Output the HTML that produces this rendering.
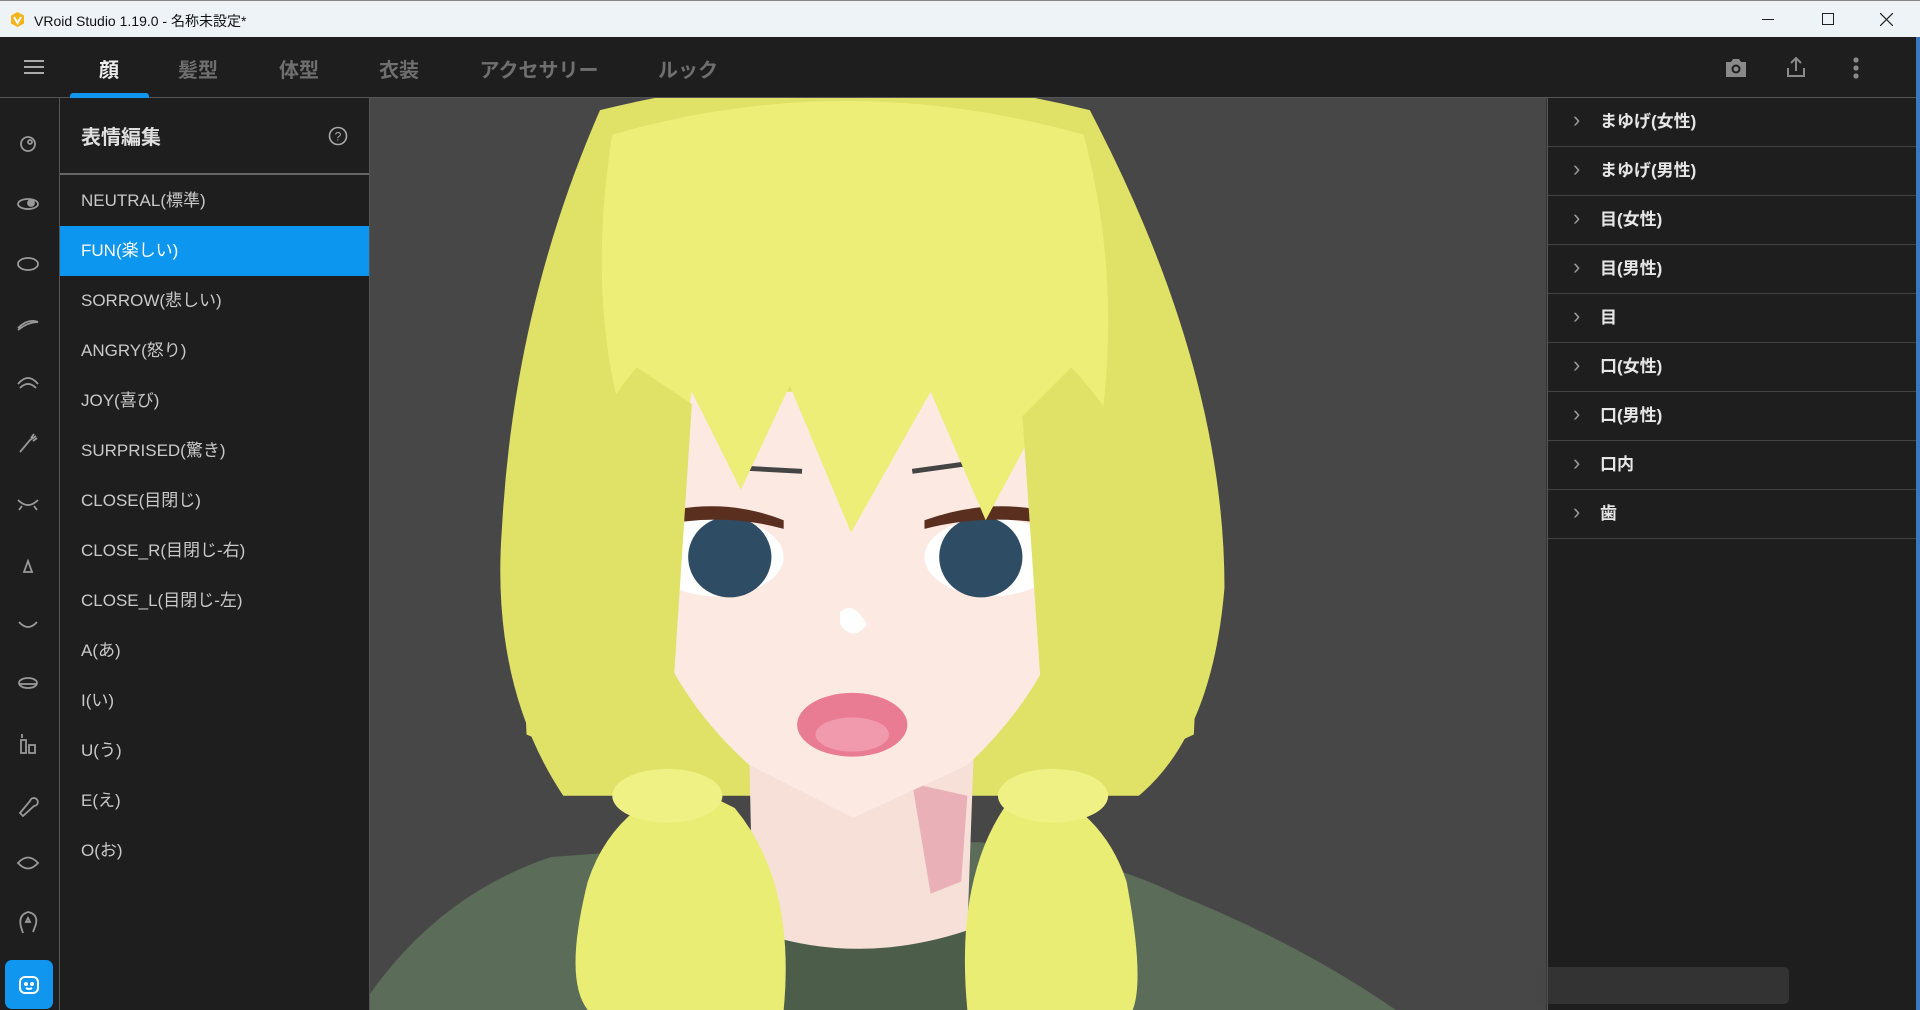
<!DOCTYPE html>
<html><head><meta charset="utf-8">
<style>
*{margin:0;padding:0;box-sizing:border-box}
body{width:1920px;height:1010px;overflow:hidden;background:#1d1d1d;font-family:"Liberation Sans","Noto Sans CJK JP",sans-serif;position:relative}
.abs{position:absolute}
#title{left:0;top:0;width:1920px;height:37px;background:#eef3f8;border-top:1px solid #888;color:#111;font-size:14px}
#title .t{left:34px;top:10px}
#tool{left:0;top:37px;width:1916px;height:61px;background:#1e1e1e;border-bottom:1px solid #555}
.tab{top:17px;font-size:20px;font-weight:bold;color:#6f6f6f;transform:translateX(-50%)}
#lcol{left:0;top:98px;width:60px;height:912px;background:#1e1e1e;border-right:1px solid #555}
#lpan{left:60px;top:98px;width:310px;height:912px;background:#1e1e1e;border-right:1px solid #555}
.hd{left:0;top:0;width:309px;height:77px;border-bottom:2px solid #666}
.it{left:0;width:309px;height:50px;line-height:50px;padding-left:21px;font-size:17px;color:#c9c9c9}
#rpan{left:1547px;top:98px;width:369px;height:912px;background:#1e1e1e;border-left:1px solid #555}
.rw{left:0;width:369px;height:49px;border-bottom:1px solid #444;color:#e6e6e6;font-size:17px;font-weight:bold;line-height:48px;padding-left:52px}
.rw:before{content:"›";position:absolute;left:25px;top:-2px;color:#999;font-size:22px;font-weight:normal}
</style></head><body>
<svg class="abs" style="left:0;top:0" width="1920" height="1010" viewBox="0 0 1568 825" preserveAspectRatio="none">
<defs><clipPath id="vp"><rect x="302" y="80" width="961" height="745"/></clipPath></defs>
<rect x="302" y="80" width="961" height="745" fill="#474747"/>
<g clip-path="url(#vp)">
<path d="M490 90 Q690 40 890 90 Q1000 300 1000 480 Q990 600 930 650 L460 650 Q400 560 410 430 Q420 250 490 90Z" fill="#dfe266"/>
<path d="M302 812 Q360 730 450 700 L615 688 L800 688 Q900 700 960 730 Q1060 770 1140 825 L302 825Z" fill="#5b6c58"/>
<path d="M600 750 Q700 800 800 750 L800 825 L600 825Z" fill="#4c5e49"/>
<path d="M612 620 L795 620 L790 760 Q700 790 615 760Z" fill="#f6e0d8"/>
<path d="M745 640 L790 650 L785 720 L760 730Z" fill="#e9b0b8"/>
<path d="M522 320 L875 320 L882 470 Q860 560 790 625 L697 668 L612 625 Q540 560 520 470Z" fill="#fbe9e2"/>
<ellipse cx="585" cy="455" rx="55" ry="32" fill="#fff"/>
<ellipse cx="810" cy="455" rx="55" ry="32" fill="#fff"/>
<ellipse cx="596" cy="455" rx="34" ry="33" fill="#2e4c63"/>
<ellipse cx="801" cy="455" rx="34" ry="33" fill="#2e4c63"/>
<path d="M535 420 Q590 405 640 425 L640 432 Q590 418 535 430Z" fill="#5b2f1f"/>
<path d="M755 425 Q810 405 865 420 L865 430 Q810 418 755 432Z" fill="#5b2f1f"/>
<path d="M600 382 L655 385 M745 385 L795 378" stroke="#444" stroke-width="4"/>
<path d="M686 500 Q697 490 708 510 Q697 525 686 510Z" fill="#fff"/>
<ellipse cx="696" cy="592" rx="45" ry="26" fill="#e97b93"/>
<ellipse cx="696" cy="600" rx="30" ry="14" fill="#f19aad"/>
<path d="M500 110 Q690 55 885 110 Q925 260 885 420 L845 350 L805 425 L760 320 L695 435 L645 315 L605 400 L565 320 L545 430 Q470 300 500 110Z" fill="#ecee78"/>
<path d="M520 300 L565 330 L550 560 L500 630 L430 600 Q420 420 520 300Z" fill="#dfe266"/>
<path d="M875 300 L835 340 L850 560 L910 630 L975 600 Q985 420 875 300Z" fill="#dfe266"/>
<path d="M560 640 Q500 660 480 720 Q460 800 480 825 L640 825 Q650 720 600 660Z" fill="#eaed74"/>
<path d="M840 640 Q900 660 920 720 Q935 800 925 825 L790 825 Q780 720 820 660Z" fill="#eaed74"/>
<ellipse cx="545" cy="650" rx="45" ry="22" fill="#eff185"/>
<ellipse cx="860" cy="650" rx="45" ry="22" fill="#eff185"/>
</g>
</svg>
<div id="title" class="abs">
<svg class="abs" style="left:9px;top:10px" width="17" height="17" viewBox="0 0 17 17"><path d="M8.5 1 L15 4.5 L15 12.5 L8.5 16 L2 12.5 L2 4.5Z" fill="#f4b51c"/><path d="M5 6 L8.5 12 L12 6" stroke="#fff" stroke-width="2" fill="none"/></svg>
<div class="abs t">VRoid Studio 1.19.0 - 名称未設定*</div>
<div class="abs" style="left:1762px;top:18px;width:12px;height:1px;background:#222"></div>
<div class="abs" style="left:1822px;top:12px;width:12px;height:12px;border:1px solid #222"></div>
<svg class="abs" style="left:1880px;top:12px" width="13" height="13"><path d="M0 0L13 13M13 0L0 13" stroke="#222" stroke-width="1.2"/></svg>
</div>
<div id="tool" class="abs">
<svg class="abs" style="left:24px;top:22px" width="20" height="16"><path d="M0 2H20M0 8H20M0 14H20" stroke="#aaa" stroke-width="2"/></svg>
<div class="abs tab" style="left:109px;color:#eee">顔</div>
<div class="abs" style="left:70px;top:56px;width:79px;height:5px;background:#1196f0;border-radius:3px 3px 0 0"></div>
<div class="abs tab" style="left:198px">髪型</div>
<div class="abs tab" style="left:299px">体型</div>
<div class="abs tab" style="left:399px">衣装</div>
<div class="abs tab" style="left:539px">アクセサリー</div>
<div class="abs tab" style="left:688px">ルック</div>
<svg class="abs" style="left:1724px;top:20px" width="24" height="22"><path d="M2 5H7L9 2H15L17 5H22V20H2Z" fill="#8a8a8a"/><circle cx="12" cy="12" r="4.5" fill="#1e1e1e"/><circle cx="12" cy="12" r="2.5" fill="#8a8a8a"/></svg>
<svg class="abs" style="left:1785px;top:18px" width="22" height="24"><path d="M11 16V3M6 8L11 3L16 8M3 13V21H19V13" stroke="#8a8a8a" stroke-width="2" fill="none"/></svg>
<svg class="abs" style="left:1852px;top:19px" width="8" height="24"><circle cx="4" cy="4" r="2.6" fill="#8a8a8a"/><circle cx="4" cy="12" r="2.6" fill="#8a8a8a"/><circle cx="4" cy="20" r="2.6" fill="#8a8a8a"/></svg>
</div>
<div id="lcol" class="abs">
<svg class="abs" style="left:0;top:0" width="60" height="912" viewBox="0 98 60 912" fill="none" stroke="#999" stroke-width="1.8">
<circle cx="28" cy="144" r="7"/><circle cx="30" cy="142" r="2"/>
<ellipse cx="28" cy="204" rx="10" ry="5"/><circle cx="31" cy="203" r="3" fill="#999"/>
<ellipse cx="28" cy="264" rx="10" ry="6"/>
<path d="M18 328 Q28 318 38 322 Q28 322 18 330"/>
<path d="M18 384 Q28 372 38 384 M20 388 Q28 380 36 388"/>
<path d="M20 452 L30 440 L36 436 M31 438 L34 434 M33 441 L37 438"/>
<path d="M18 500 Q28 510 38 500 M22 506 L19 510 M34 506 L37 510"/>
<path d="M24 572 L28 561 L32 572Z"/>
<path d="M19 622 Q28 632 37 622"/>
<ellipse cx="28" cy="683" rx="9" ry="5"/><path d="M20 684 H36"/>
<path d="M21 740 V753 H26 V740Z M22 738 V734 M29 745 H35 V753 H29Z"/>
<path d="M20 813 L30 801 A4 4 0 1 1 34 806 L23 816Z"/>
<path d="M18 863 Q28 852 38 863 Q28 874 18 863Z"/>
<path d="M23 933 L21 927 Q18 915 28 912 Q38 914 36 924 L33 932 M28 918 L30 922 L26 922Z"/>
</svg>
<div class="abs" style="left:5px;top:862px;width:48px;height:49px;background:#1196f0;border-radius:7px"></div>
<svg class="abs" style="left:18px;top:876px" width="22" height="22" fill="none" stroke="#fff" stroke-width="2"><rect x="2" y="3" width="18" height="16" rx="5"/><circle cx="8" cy="10" r="1" fill="#fff"/><circle cx="14" cy="10" r="1" fill="#fff"/><path d="M8 14 Q11 16 14 14"/></svg>
</div>
<div id="lpan" class="abs">
<div class="abs hd"><div class="abs" style="left:21px;top:23px;font-size:20px;font-weight:bold;color:#e0e0e0">表情編集</div>
<svg class="abs" style="left:268px;top:28px" width="20" height="20" fill="none" stroke="#aaa" stroke-width="1.6"><circle cx="10" cy="10" r="8.5"/><text x="10" y="14.5" font-size="12" fill="#aaa" stroke="none" text-anchor="middle" font-family="Liberation Sans">?</text></svg></div>
<div class="abs it" style="top:78px">NEUTRAL(標準)</div>
<div class="abs it" style="top:128px;background:#0c96f0;color:#fff">FUN(楽しい)</div>
<div class="abs it" style="top:178px">SORROW(悲しい)</div>
<div class="abs it" style="top:228px">ANGRY(怒り)</div>
<div class="abs it" style="top:278px">JOY(喜び)</div>
<div class="abs it" style="top:328px">SURPRISED(驚き)</div>
<div class="abs it" style="top:378px">CLOSE(目閉じ)</div>
<div class="abs it" style="top:428px">CLOSE_R(目閉じ-右)</div>
<div class="abs it" style="top:478px">CLOSE_L(目閉じ-左)</div>
<div class="abs it" style="top:528px">A(あ)</div>
<div class="abs it" style="top:578px">I(い)</div>
<div class="abs it" style="top:628px">U(う)</div>
<div class="abs it" style="top:678px">E(え)</div>
<div class="abs it" style="top:728px">O(お)</div>
</div>
<div id="rpan" class="abs">
<div class="abs rw" style="top:0">まゆげ(女性)</div>
<div class="abs rw" style="top:49px">まゆげ(男性)</div>
<div class="abs rw" style="top:98px">目(女性)</div>
<div class="abs rw" style="top:147px">目(男性)</div>
<div class="abs rw" style="top:196px">目</div>
<div class="abs rw" style="top:245px">口(女性)</div>
<div class="abs rw" style="top:294px">口(男性)</div>
<div class="abs rw" style="top:343px">口内</div>
<div class="abs rw" style="top:392px">歯</div>
</div>
<div class="abs" style="left:1537px;top:967px;width:252px;height:37px;border-radius:5px;background:rgba(70,70,70,.55)"></div>
<div class="abs" style="left:1916px;top:37px;width:4px;height:973px;background:#3a78c0"></div>
</body></html>
